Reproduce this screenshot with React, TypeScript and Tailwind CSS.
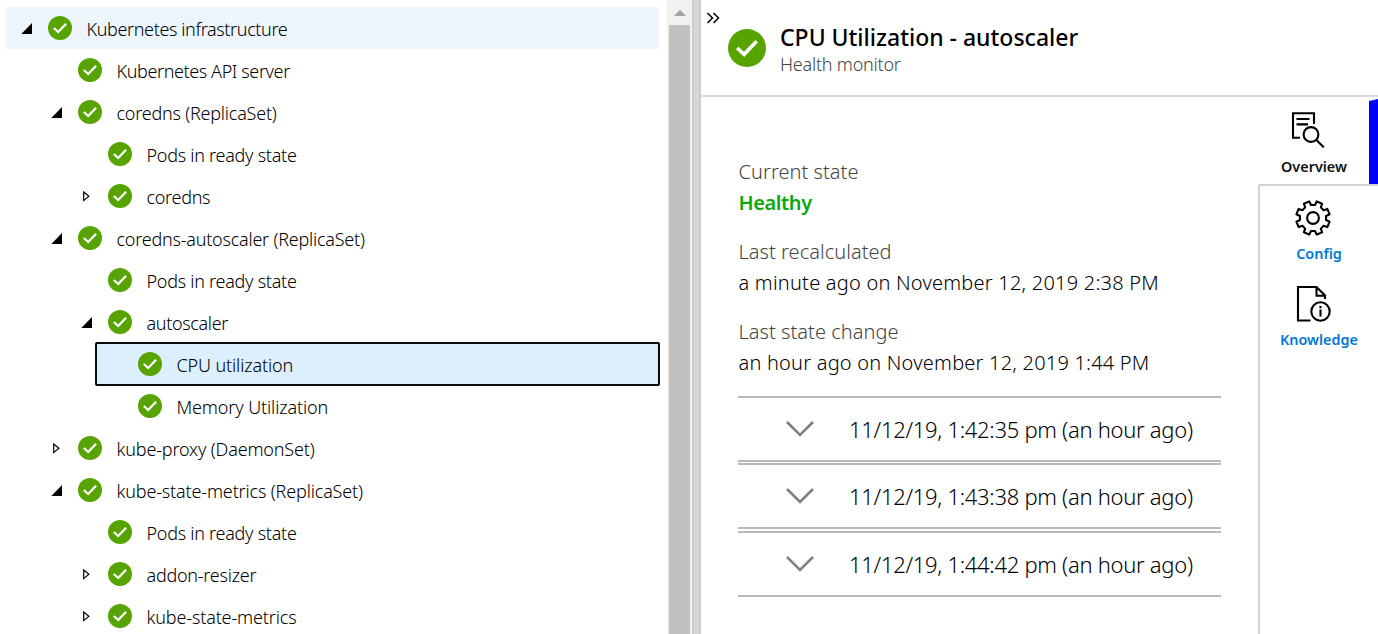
type Arrow = "open" | "closed" | "none";
type Node = { label: string; level: number; arrow: Arrow; tracking: string; state?: "root" | "selected" };

const nodes: Node[] = [
  { label: "Kubernetes infrastructure", level: 0, arrow: "open", tracking: "tracking-[-0.38px]", state: "root" },
  { label: "Kubernetes API server", level: 1, arrow: "none", tracking: "tracking-[-0.4px]" },
  { label: "coredns (ReplicaSet)", level: 1, arrow: "open", tracking: "tracking-[-0.22px]" },
  { label: "Pods in ready state", level: 2, arrow: "none", tracking: "tracking-[-0.27px]" },
  { label: "coredns", level: 2, arrow: "closed", tracking: "tracking-[-0.3px]" },
  { label: "coredns-autoscaler (ReplicaSet)", level: 1, arrow: "open", tracking: "tracking-[-0.23px]" },
  { label: "Pods in ready state", level: 2, arrow: "none", tracking: "tracking-[-0.27px]" },
  { label: "autoscaler", level: 2, arrow: "open", tracking: "tracking-[-0.35px]" },
  { label: "CPU utilization", level: 3, arrow: "none", tracking: "tracking-[-0.13px]", state: "selected" },
  { label: "Memory Utilization", level: 3, arrow: "none", tracking: "tracking-[-0.13px]" },
  { label: "kube-proxy (DaemonSet)", level: 1, arrow: "closed", tracking: "tracking-[-0.17px]" },
  { label: "kube-state-metrics (ReplicaSet)", level: 1, arrow: "open", tracking: "tracking-[-0.16px]" },
  { label: "Pods in ready state", level: 2, arrow: "none", tracking: "tracking-[-0.27px]" },
  { label: "addon-resizer", level: 2, arrow: "closed", tracking: "tracking-[-0.25px]" },
  { label: "kube-state-metrics", level: 2, arrow: "closed", tracking: "tracking-[-0.15px]" },
];

const indents = ["ml-0", "ml-[30px]", "ml-[60px]", "ml-[90px]"];

function Check({ className }: { className: string }) {
  return (
    <svg viewBox="0 0 24 24" className={className}>
      <circle cx="12" cy="12" r="12" fill="#57a300" />
      <path d="M5.8 12 10.2 16 18.1 7.7" fill="none" stroke="#fff" strokeWidth="2.3" />
    </svg>
  );
}

function Twisty({ arrow }: { arrow: Arrow }) {
  return (
    <svg viewBox="0 0 12 12" className="mt-[2px] h-3 w-3 shrink-0">
      {arrow === "open" && <path d="M11 0V11H0.3Z" fill="#000" />}
      {arrow === "closed" && <path d="M2.7 1V9.6L7.9 5.3Z" fill="#fff" stroke="#000" strokeWidth="1.2" />}
    </svg>
  );
}

function TreeRow({ node }: { node: Node }) {
  const bg =
    node.state === "root"
      ? "bg-[#edf6ff]"
      : node.state === "selected"
        ? "rounded-[1px] bg-[#dbefff] outline-2 -outline-offset-1 outline-[#0c0c0c]"
        : "";
  return (
    <div className={`flex h-[42px] shrink-0 items-center pl-[15px] ${indents[node.level]} ${bg}`}>
      <Twisty arrow={node.arrow} />
      <Check className="ml-[15px] h-6 w-6 shrink-0" />
      <span
        className={`mt-px ml-[14.5px] whitespace-nowrap text-[18px] leading-6 font-light text-black ${node.tracking}`}
      >
        {node.label}
      </span>
    </div>
  );
}

function Field({ label, value, valueClass }: { label: string; value: string; valueClass: string }) {
  return (
    <div className="mb-[18px] flex flex-col pl-[0.5px] whitespace-nowrap text-[20px] leading-[31px]">
      <span className="font-light tracking-[0.04px] text-[#444]">{label}</span>
      <span className={valueClass}>{value}</span>
    </div>
  );
}

function HistoryRow({ text, className }: { text: string; className: string }) {
  return (
    <div className={`flex items-center border-y-2 border-[#b9b9b9] pl-[47.5px] ${className}`}>
      <svg viewBox="0 0 28 16" className="mb-px h-4 w-7 shrink-0" fill="none" stroke="#808080" strokeWidth="2.6">
        <path d="M1 1 14 14 27 1" />
      </svg>
      <span className="ml-[35.5px] whitespace-nowrap text-[22px] font-light tracking-[-0.29px] text-black">
        {text}
      </span>
    </div>
  );
}

function OverviewIcon() {
  return (
    <svg viewBox="0 0 34 37" className="h-[37px] w-[34px]" fill="none" stroke="#000" strokeWidth="2.1">
      <path d="M9 26.8H2V2.3H23V13" />
      <path d="M5.5 8H18.5M5.5 13.4H17" />
      <circle cx="20" cy="23.5" r="7.4" fill="#fff" />
      <path d="m25.2 28.8 7.6 7.6" />
    </svg>
  );
}

function gearPath(teeth: number) {
  const pts: string[] = [];
  const step = (Math.PI * 2) / teeth;
  for (let i = 0; i < teeth; i++) {
    const a = -Math.PI / 2 + step / 2 + i * step;
    const corners: [number, number][] = [
      [13.2, -0.31],
      [17, -0.22],
      [17, 0.22],
      [13.2, 0.31],
    ];
    for (const [r, o] of corners) {
      const t = a + o * step;
      pts.push(`${(18 + r * Math.cos(t)).toFixed(2)} ${(18 + r * Math.sin(t)).toFixed(2)}`);
    }
  }
  return `M${pts.join("L")}Z`;
}

function GearIcon() {
  return (
    <svg viewBox="0 0 36 36" className="mr-[13px] h-9 w-9" fill="none" stroke="#000" strokeWidth="2.1">
      <path d={gearPath(8)} strokeLinejoin="round" />
      <circle cx="18" cy="18" r="5.9" />
    </svg>
  );
}

function KnowledgeIcon() {
  return (
    <svg viewBox="0 0 36 38" className="h-[38px] w-9" fill="none" stroke="#000" strokeWidth="2.1">
      <path d="M15.5 35.5H3V2H21.5L30 10.5V14M21.5 2V10.8H30" />
      <circle cx="25.5" cy="26.5" r="9.2" fill="#fff" />
      <path d="M25.5 24.6V31.5M25.5 21V23.2" />
    </svg>
  );
}

export default function App() {
  return (
    <div className="flex h-[634px] w-[1378px] overflow-hidden bg-white font-['Noto_Sans',sans-serif] text-black">
      <div className="flex w-[667px] shrink-0 flex-col overflow-hidden pt-[7px] pr-2 pl-[6px]">
        {nodes.map((n, i) => (
          <TreeRow key={i} node={n} />
        ))}
      </div>
      <div className="flex w-[25px] shrink-0 flex-col bg-[#f1f1f1] px-[2px]">
        <div className="flex h-[25px] shrink-0 items-center justify-center">
          <svg viewBox="0 0 12 6" className="h-1.5 w-3">
            <path d="M6 0 12 6H0Z" fill="#a3a3a3" />
          </svg>
        </div>
        <div className="flex-1 bg-[#c1c1c1]" />
      </div>
      <div className="w-[9px] shrink-0 border-x-2 border-[#cdcdcd] bg-[#d6d6d6]" />
      <div className="flex min-w-0 flex-1 flex-col">
        <div className="flex h-[97px] shrink-0 border-b-2 border-[#dadada]">
          <svg viewBox="0 0 14 12" className="mt-3 ml-[5px] h-3 w-3.5" fill="none" stroke="#000" strokeWidth="1.5">
            <path d="M1.5 1 6.5 6 1.5 11M7.5 1 12.5 6 7.5 11" />
          </svg>
          <Check className="mt-[29px] ml-[7.5px] h-[38px] w-[38px] shrink-0" />
          <div className="mt-[21px] ml-[14.5px] flex flex-col whitespace-nowrap">
            <span className="text-[23px] leading-8 font-medium">CPU Utilization - autoscaler</span>
            <span className="text-[18px] leading-[22px] font-light tracking-[-0.22px] text-[#444]">
              Health monitor
            </span>
          </div>
        </div>
        <div className="flex min-h-0 flex-1">
          <div className="w-[557px] shrink-0 pt-[59px] pr-[37px] pl-[37px]">
            <Field label="Current state" value="Healthy" valueClass="font-semibold text-[#0aa80a] tracking-[-0.4px]" />
            <Field
              label="Last recalculated"
              value="a minute ago on November 12, 2019 2:38 PM"
              valueClass="font-light tracking-[0.22px]"
            />
            <Field
              label="Last state change"
              value="an hour ago on November 12, 2019 1:44 PM"
              valueClass="font-light tracking-[0.21px]"
            />
            <HistoryRow text="11/12/19, 1:42:35 pm (an hour ago)" className="h-[66px]" />
            <HistoryRow text="11/12/19, 1:43:38 pm (an hour ago)" className="mt-px h-[66px]" />
            <HistoryRow text="11/12/19, 1:44:42 pm (an hour ago)" className="mt-[2px] h-[66px]" />
          </div>
          <div className="flex flex-1 flex-col">
            <div className="flex h-[89px] shrink-0">
              <div className="flex w-[111px] flex-col items-center pt-[14px]">
                <div className="mr-[11px]">
                  <OverviewIcon />
                </div>
                <span className="mt-[9px] ml-px text-[14.4px] leading-5 font-semibold text-[#111]">Overview</span>
              </div>
              <svg viewBox="0 0 9 87" className="mt-[2px] h-[87px] w-[9px] shrink-0">
                <path d="M0 2 9 0V87L0 85.5Z" fill="#0000ff" />
              </svg>
            </div>
            <div className="-mt-[2px] flex flex-1 flex-col items-center rounded-tl-[2px] border-t-2 border-l-2 border-[#d2d2d2] pt-[14px]">
              <GearIcon />
              <span className="mt-[8px] text-[14.4px] leading-5 font-semibold text-[#0078d7]">Config</span>
              <div className="mt-[21px] mr-[13px]">
                <KnowledgeIcon />
              </div>
              <span className="mt-[7px] text-[14.4px] leading-5 font-semibold text-[#0078d7]">Knowledge</span>
            </div>
          </div>
        </div>
      </div>
    </div>
  );
}
